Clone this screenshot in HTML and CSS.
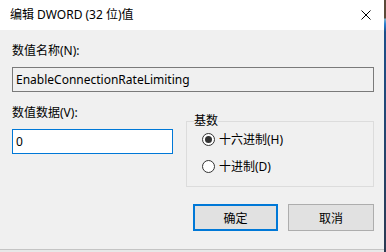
FILE: index.html
```html
<!DOCTYPE html>
<html lang="zh-CN">
<head>
<meta charset="utf-8">
<title>编辑 DWORD (32 位)值</title>
<link rel="stylesheet" href="styles.css">
</head>
<body>
<div class="screen">
  <div class="window">
    <div class="titlebar">
      <span class="title">编辑 DWORD (32 位)值</span>
      <span class="close">
        <svg width="10" height="10" viewBox="0 0 10 10"><path d="M0.5 0.5 L9.5 9.5 M9.5 0.5 L0.5 9.5" stroke="#000" stroke-width="1" fill="none"/></svg>
      </span>
    </div>
    <div class="body">
      <div class="label">数值名称(N):</div>
      <div class="field readonly">EnableConnectionRateLimiting</div>
      <div class="row">
        <div class="col">
          <div class="label">数值数据(V):</div>
          <div class="field active">0</div>
        </div>
        <fieldset class="group">
          <legend>基数</legend>
          <div class="radio"><span class="dot checked"></span><span>十六进制(H)</span></div>
          <div class="radio"><span class="dot"></span><span>十进制(D)</span></div>
        </fieldset>
      </div>
      <div class="buttons">
        <div class="btn default">确定</div>
        <div class="btn">取消</div>
      </div>
    </div>
  </div>
  <div class="desk"></div>
</div>
</body>
</html>
```
FILE: styles.css
```css
html, body {
  margin: 0;
  padding: 0;
}
body {
  width: 386px;
  height: 252px;
  overflow: hidden;
  background: #e8e8e8;
  font-family: "Noto Sans", "Noto Sans CJK SC", sans-serif;
  font-size: 12px;
  color: #000;
}
.screen {
  display: flex;
  width: 386px;
  height: 252px;
}
.window {
  width: 384px;
  height: 249px;
  background: #f0f0f0;
  border-bottom: 1px solid #c4c4c4;
  display: flex;
  flex-direction: column;
}
.desk {
  width: 2px;
  height: 252px;
  background: linear-gradient(#5a4a3a 0, #5a4a3a 18px, #7fb0c8 19px, #2a7fd0 24px, #1c4f8a 32px, #2b3a52 100%);
}
.titlebar {
  height: 30px;
  background: #fff;
  display: flex;
  align-items: center;
  justify-content: space-between;
  padding: 0 12px 0 10px;
  flex-shrink: 0;
}
.title {
  font-size: 12px;
  line-height: 16px;
}
.close {
  display: flex;
  width: 10px;
  height: 10px;
  margin-right: 1px;
}
.body {
  padding: 13px 10px 0 12px;
  display: flex;
  flex-direction: column;
}
.label {
  line-height: 16px;
  height: 16px;
}
.field {
  box-sizing: border-box;
  height: 25px;
  line-height: 23px;
  padding: 0 3px;
  border: 1px solid #7a7a7a;
}
.body > .field {
  margin-top: 8px;
}
.readonly {
  background: #f0f0f0;
  color: #000;
}
.active {
  background: #fff;
  border-color: #0078d7;
  margin-top: 8px;
}
.row {
  display: flex;
  gap: 13px;
  margin-top: 13px;
}
.col {
  width: 161px;
  display: flex;
  flex-direction: column;
}
.group {
  margin: 8px 0 0 0;
  padding: 2px 7px 10px 7px;
  width: 188px;
  box-sizing: border-box;
  height: 74px;
  border: 1px solid #dcdcdc;
  min-width: 0;
}
.group legend {
  padding: 0;
  line-height: 16px;
}
.radio {
  display: flex;
  align-items: center;
  gap: 4px;
  height: 16px;
  margin-left: 8px;
}
.radio + .radio {
  margin-top: 11px;
}
.dot {
  box-sizing: border-box;
  width: 13px;
  height: 13px;
  border: 1px solid #333;
  border-radius: 50%;
  background: #fff;
  display: flex;
  align-items: center;
  justify-content: center;
}
.dot.checked::after {
  content: "";
  width: 7px;
  height: 7px;
  border-radius: 50%;
  background: #333;
}
.buttons {
  display: flex;
  justify-content: flex-end;
  gap: 10px;
  margin-top: 17px;
}
.btn {
  box-sizing: border-box;
  width: 86px;
  height: 27px;
  background: #e1e1e1;
  border: 1px solid #adadad;
  display: flex;
  align-items: center;
  justify-content: center;
}
.btn.default {
  width: 85px;
  border: 2px solid #0078d7;
}
```
